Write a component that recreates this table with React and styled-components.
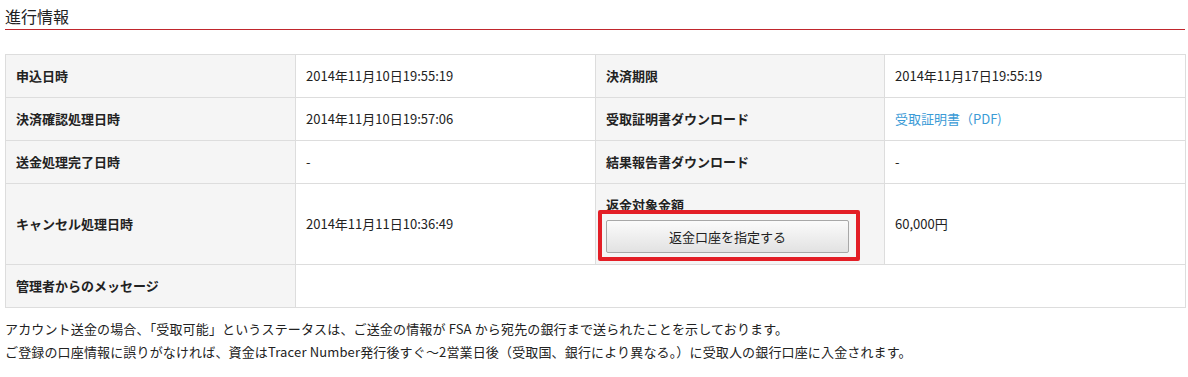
import React from "react";
import styled, { createGlobalStyle } from "styled-components";

const Global = createGlobalStyle`
  html, body { margin: 0; padding: 0; background: #fff; }
  body {
    font-family: "Noto Sans CJK JP", "Noto Sans", "Liberation Sans", sans-serif;
    color: #222;
    font-size: 13px;
  }
`;

const Page = styled.div`
  padding: 0 3px 0 5px;
`;

const Heading = styled.h2`
  margin: 0;
  padding: 4px 0 1px;
  font-size: 16px;
  line-height: 24px;
  font-weight: 400;
  color: #222;
  border-bottom: 1px solid #c0272d;
`;

const Table = styled.table`
  margin-top: 24px;
  width: 1180px;
  border-collapse: collapse;
  table-layout: fixed;
  border: 1px solid #ddd;
`;

const Th = styled.th`
  background: #f5f5f5;
  border: 1px solid #ddd;
  padding: 11px 10px;
  line-height: 20px;
  text-align: left;
  font-weight: 700;
  font-size: 13px;
  color: #222;
  vertical-align: middle;
`;

const Td = styled.td`
  background: #fff;
  border: 1px solid #ddd;
  padding: 11px 10px;
  line-height: 20px;
  font-size: 13px;
  color: #222;
  vertical-align: middle;
`;

const Link = styled.a`
  color: #3b9bd6;
  text-decoration: none;
`;

const ButtonWrap = styled.div`
  position: relative;
  margin-top: 5px;
  width: 243px;
`;

const Highlight = styled.span`
  position: absolute;
  top: -10px;
  left: -8px;
  right: -11px;
  bottom: -8px;
  border: 4px solid #e31e26;
  border-radius: 2px;
  pointer-events: none;
`;

const Button = styled.button`
  display: block;
  width: 243px;
  height: 33px;
  border: 1px solid #a8a8a8;
  border-radius: 2px;
  background: linear-gradient(#fbfbfb, #e2e2e2);
  font-family: inherit;
  font-size: 13px;
  font-weight: 400;
  color: #222;
  cursor: pointer;
`;

const Notes = styled.div`
  margin-top: 9px;
  font-size: 13px;
  line-height: 23px;
  color: #222;
  letter-spacing: 0.15px;
`;

const Line = styled.p`
  margin: 0;
`;

export default function App() {
  return (
    <Page>
      <Global />
      <Heading>進行情報</Heading>
      <Table>
        <colgroup>
          <col style={{ width: 290 }} />
          <col style={{ width: 300 }} />
          <col style={{ width: 289 }} />
          <col style={{ width: 301 }} />
        </colgroup>
        <tbody>
          <tr>
            <Th>申込日時</Th>
            <Td>2014年11月10日19:55:19</Td>
            <Th>決済期限</Th>
            <Td>2014年11月17日19:55:19</Td>
          </tr>
          <tr>
            <Th>決済確認処理日時</Th>
            <Td>2014年11月10日19:57:06</Td>
            <Th>受取証明書ダウンロード</Th>
            <Td>
              <Link href="#">受取証明書（PDF)</Link>
            </Td>
          </tr>
          <tr>
            <Th>送金処理完了日時</Th>
            <Td>-</Td>
            <Th>結果報告書ダウンロード</Th>
            <Td>-</Td>
          </tr>
          <tr>
            <Th>キャンセル処理日時</Th>
            <Td>2014年11月11日10:36:49</Td>
            <Th>
              返金対象金額
              <ButtonWrap>
                <Button type="button">返金口座を指定する</Button>
                <Highlight />
              </ButtonWrap>
            </Th>
            <Td>60,000円</Td>
          </tr>
          <tr>
            <Th>管理者からのメッセージ</Th>
            <Td colSpan={3}></Td>
          </tr>
        </tbody>
      </Table>
      <Notes>
        <Line>
          アカウント送金の場合、「受取可能」というステータスは、ご送金の情報が FSA から宛先の銀行まで送られたことを示しております。
        </Line>
        <Line>
          ご登録の口座情報に誤りがなければ、資金はTracer Number発行後すぐ～2営業日後（受取国、銀行により異なる。）に受取人の銀行口座に入金されます。
        </Line>
      </Notes>
    </Page>
  );
}
